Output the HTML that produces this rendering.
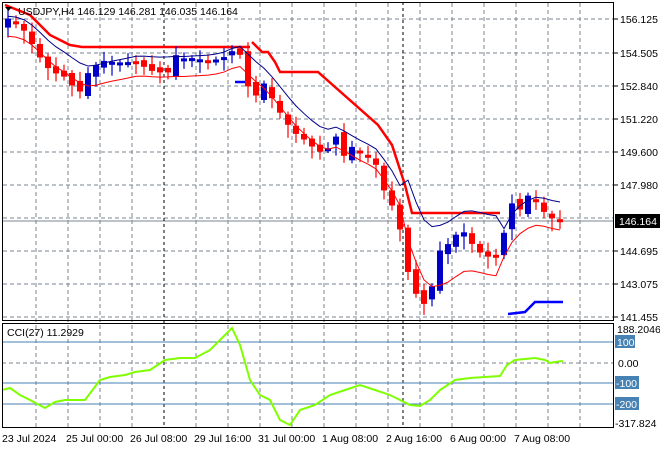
<!DOCTYPE html><html><head><style>
body{margin:0;background:#fff;width:660px;height:450px;overflow:hidden;font-family:"Liberation Sans",sans-serif}
svg text{font-family:"Liberation Sans",sans-serif;font-size:10.5px;fill:#000}
</style></head><body>
<svg id="s" width="660" height="450" xmlns="http://www.w3.org/2000/svg">
<rect width="660" height="450" fill="#fff"/>
<g id="grid" stroke="#7a8591" stroke-dasharray="4,3" stroke-width="1"></g>
<line x1="2" y1="221" x2="614" y2="221" stroke="#7a8591"/>
<line x1="164" y1="2" x2="164" y2="428" stroke="#000" stroke-dasharray="3,3"/>
<line x1="403" y1="2" x2="403" y2="428" stroke="#000" stroke-dasharray="3,3"/>
<line x1="2" y1="342" x2="614" y2="342" stroke="#4682b4"/>
<line x1="2" y1="383" x2="614" y2="383" stroke="#4682b4"/>
<line x1="2" y1="404" x2="614" y2="404" stroke="#4682b4"/>
<line x1="2" y1="363" x2="614" y2="363" stroke="#7a8591" stroke-dasharray="4,3"/>
<polyline fill="none" stroke="#f00" stroke-width="2.5" points="5,5 30,15 50,35 70,45 82,47 250,47"/>
<polyline fill="none" stroke="#f00" stroke-width="2.5" points="252,42 262,52 268,52 275,62 280,72 318,72 378,125 392,145 405,185 412,213 500,213"/>
<polyline fill="none" stroke="#00f" stroke-width="2.5" points="235,82 245,82"/>
<polyline fill="none" stroke="#00f" stroke-width="2.5" points="508,314 525,312 535,302 563,302"/>
<g id="c"></g>
<polyline id="ma1" fill="none" stroke="#00008b" stroke-width="1"/>
<polyline id="ma2" fill="none" stroke="#f00" stroke-width="1"/>
<polyline fill="none" stroke="#7fff00" stroke-width="2" points="2,390 10,388 20,395 30,400 45,408 55,402 65,400 85,400 100,380 110,377 125,375 135,372 150,370 165,360 180,358 195,358 210,350 222,338 232,328 240,345 250,380 260,395 270,400 280,420 290,425 300,410 315,405 330,395 345,390 360,385 375,390 390,395 400,400 410,405 420,406 430,400 440,390 455,380 470,378 485,377 500,376 507,365 515,360 525,359 535,358 545,360 550,363 555,362 563,361"/>
<rect x="2.5" y="2.5" width="611" height="318" fill="none" stroke="#000"/>
<rect x="2.5" y="323.5" width="611" height="104" fill="none" stroke="#000"/>
<g id="ax"></g>
<text x="18" y="15">USDJPY,H4  146.129 146.281 146.035 146.164</text>
<path d="M5,7 L12,7 L8.5,11Z" fill="#000"/>
<text x="7" y="336">CCI(27) 11.2929</text>
<rect x="615" y="214" width="45" height="14" fill="#000"/>
<text x="619" y="225" style="fill:#fff">146.164</text>
<rect x="615" y="335" width="20" height="13" fill="#4682b4"/><text x="617" y="346" style="fill:#fff">100</text>
<rect x="615" y="376" width="24" height="13" fill="#4682b4"/><text x="616" y="387" style="fill:#fff">-100</text>
<rect x="615" y="397" width="24" height="13" fill="#4682b4"/><text x="616" y="408" style="fill:#fff">-200</text>
<text x="617" y="333">188.2046</text>
<text x="618" y="367">0.00</text>
<text x="615" y="427">-317.824</text>
</svg>
<script>
var N="http://www.w3.org/2000/svg",s=document.getElementById('s');
function el(p,t,a){var e=document.createElementNS(N,t);for(var k in a)e.setAttribute(k,a[k]);p.appendChild(e);return e;}
var g=document.getElementById('grid');
[36,68,100,132,196,228,260,292,324,356,388,420,452,484,516,548,580].forEach(function(x){el(g,'line',{x1:x,y1:3,x2:x,y2:427});});
[19,53,86,119,152,185,218,251,284,317].forEach(function(y){el(g,'line',{x1:3,y1:y,x2:613,y2:y});});
var ax=document.getElementById('ax');
var L=[[19,"156.125"],[53,"154.505"],[86,"152.840"],[119,"151.220"],[152,"149.600"],[185,"147.980"],[251,"144.695"],[284,"143.075"],[317,"141.455"]];
L.forEach(function(l){el(ax,'line',{x1:614,y1:l[0],x2:618,y2:l[0],stroke:'#000'});var t=el(ax,'text',{x:620,y:l[0]+4});t.textContent=l[1];});
var T=[[2,"23 Jul 2024"],[66,"25 Jul 00:00"],[130,"26 Jul 08:00"],[194,"29 Jul 16:00"],[258,"31 Jul 00:00"],[322,"1 Aug 08:00"],[386,"2 Aug 16:00"],[450,"6 Aug 00:00"],[514,"7 Aug 08:00"]];
T.forEach(function(l){var t=el(ax,'text',{x:l[0],y:442});t.textContent=l[1];});
var K=[[8,25],[20,28],[35,50],[45,65],[55,70],[65,72],[75,82],[85,85],[95,72],[105,65],[115,65],[125,63],[135,60],[145,64],[155,67],[165,65],[175,63],[185,65],[195,62],[205,63],[215,60],[225,55],[232,48],[240,50],[248,80],[255,87],[265,92],[275,110],[285,125],[295,135],[305,140],[315,147],[325,150],[335,128],[345,150],[355,157],[365,160],[375,165],[385,195],[395,210],[402,235],[410,280],[420,295],[428,300],[435,262],[445,255],[455,240],[465,235],[475,250],[485,255],[495,255],[502,252],[507,192],[515,200],[525,203],[535,205],[545,218],[555,223],[562,221]];
function f(x){for(var i=1;i<K.length;i++)if(x<=K[i][0]){var a=K[i-1],b=K[i];return a[1]+(b[1]-a[1])*(x-a[0])/(b[0]-a[0]);}return K[K.length-1][1];}
var c=document.getElementById('c'),prev=f(4),m1=[],m2=[],sm=prev;
for(var x=8;x<=562;x+=8){var j=((x*7)%11-5);var cl=f(x)+j*1.6;var o=prev-j*0.9;var up=cl<o;var col=up?'#0000c8':'#f00';
var hi=Math.min(o,cl)-3-((x*3)%9),lo=Math.max(o,cl)+3+((x*5)%11);
el(c,'line',{x1:x,y1:hi,x2:x,y2:lo,stroke:col,'stroke-width':1.2});
var h=Math.max(3,Math.abs(cl-o));el(c,'rect',{x:x-3,y:Math.min(o,cl),width:6,height:h,fill:col});
sm=sm*0.7+f(x)*0.3;m1.push(x+','+(sm-8+(x>400?(x<500?-28:-8):0)));m2.push(x+','+(sm+12+(x>400&&x<500?12:0)));prev=cl;}
document.getElementById('ma1').setAttribute('points',m1.join(' '));
document.getElementById('ma2').setAttribute('points',m2.join(' '));
</script>
</body></html>
